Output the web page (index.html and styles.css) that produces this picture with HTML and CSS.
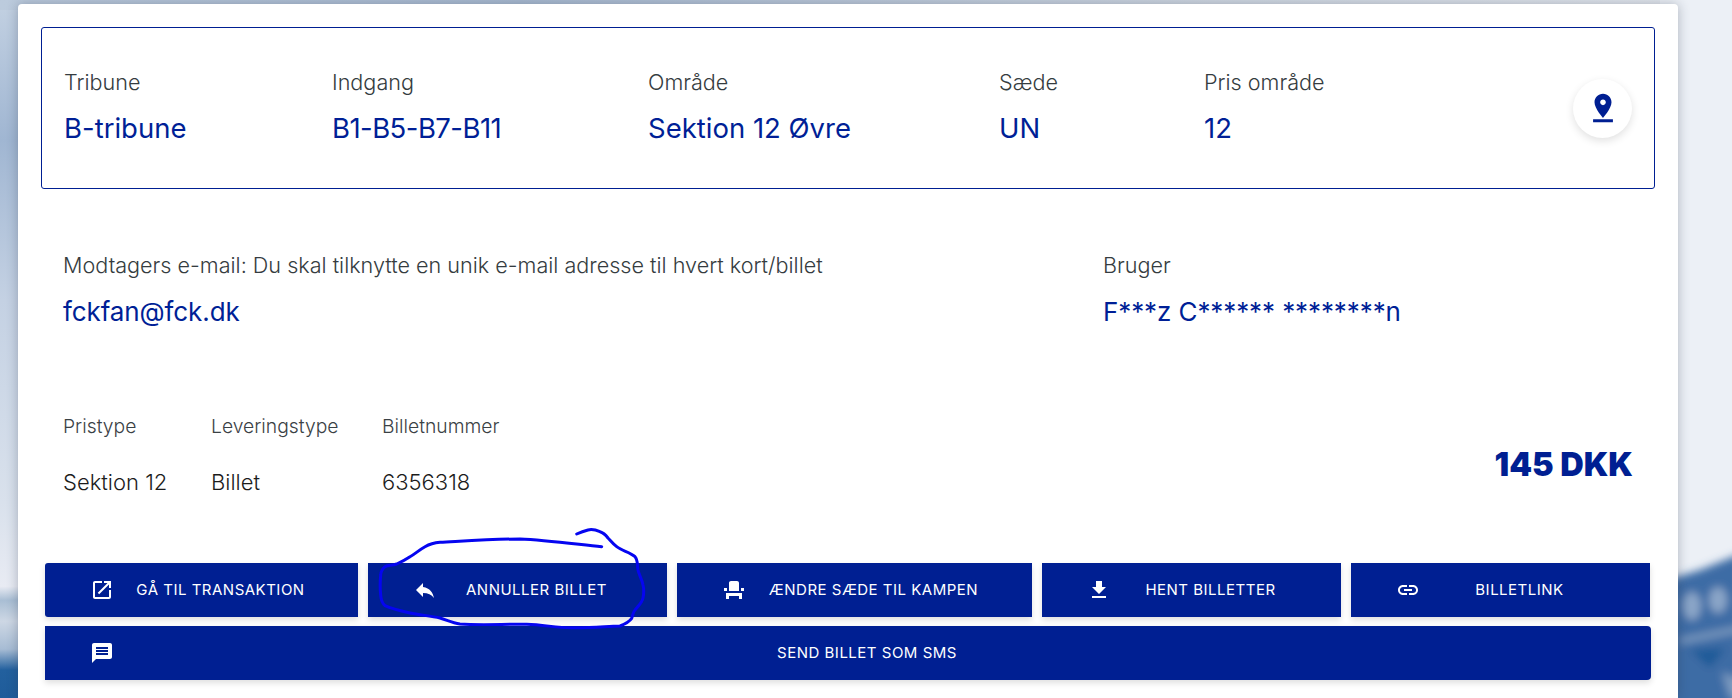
FILE: index.html
```html
<!DOCTYPE html>
<html lang="da">
<head>
<meta charset="utf-8">
<title>Billet</title>
<link rel="stylesheet" href="styles.css">
</head>
<body>
<svg class="backdrop" viewBox="0 0 1732 698" preserveAspectRatio="none" aria-hidden="true">
  <defs>
    <linearGradient id="lft" x1="0" y1="0" x2="0" y2="1">
      <stop offset="0" stop-color="#c3d1e2"/>
      <stop offset=".2" stop-color="#a0b6d2"/>
      <stop offset=".43" stop-color="#c4d1e3"/>
      <stop offset=".72" stop-color="#d9e1ec"/>
      <stop offset=".84" stop-color="#e8ebf3"/>
      <stop offset=".86" stop-color="#a9bed4"/>
      <stop offset=".89" stop-color="#cdd7e4"/>
      <stop offset=".93" stop-color="#a7bcd4"/>
      <stop offset=".96" stop-color="#22609e"/>
      <stop offset="1" stop-color="#1f5c9a"/>
    </linearGradient>
    <linearGradient id="top" x1="0" y1="0" x2="1" y2="0">
      <stop offset="0" stop-color="#bccbdd"/>
      <stop offset=".3" stop-color="#a9bbd2"/>
      <stop offset=".7" stop-color="#d0d8e2"/>
      <stop offset="1" stop-color="#e6eaf0"/>
    </linearGradient>
    <filter id="soft" x="-20%" y="-20%" width="140%" height="140%"><feGaussianBlur stdDeviation="4"/></filter>
  </defs>
  <rect x="0" y="0" width="60" height="698" fill="url(#lft)"/>
  <rect x="0" y="0" width="1732" height="10" fill="url(#top)"/>
  <rect x="1660" y="0" width="72" height="698" fill="#ecf0f6"/>
  <g filter="url(#soft)">
    <polygon points="1660,582 1700,570 1740,554 1740,710 1660,710" fill="#3c6ca5"/>
    <ellipse cx="1692" cy="606" rx="9" ry="14" fill="#8ba6c8"/>
    <ellipse cx="1718" cy="600" rx="9" ry="13" fill="#8ba6c8"/>
    <polygon points="1680,638 1740,626 1740,632 1680,644" fill="#7d9bc0"/>
    <polygon points="1690,650 1726,648 1710,668" fill="#1c5a98"/>
    <polygon points="1722,672 1740,680 1740,698 1730,698" fill="#7d9bc0"/>
  </g>
</svg>

<main class="card">
  <section class="seat-box">
    <div class="field f-tribune"><span class="label">Tribune</span><span class="value">B-tribune</span></div>
    <div class="field f-indgang"><span class="label">Indgang</span><span class="value">B1-B5-B7-B11</span></div>
    <div class="field f-omraade"><span class="label">Område</span><span class="value">Sektion 12 Øvre</span></div>
    <div class="field f-saede"><span class="label">Sæde</span><span class="value">UN</span></div>
    <div class="field f-pris"><span class="label">Pris område</span><span class="value">12</span></div>
    <button class="pin" type="button" aria-label="Vis på kort">
      <svg viewBox="0 0 24 24"><path d="M18 8c0-3.31-2.69-6-6-6S6 4.69 6 8c0 4.5 6 11 6 11s6-6.5 6-11zm-8 0c0-1.1.9-2 2-2s2 .9 2 2-.89 2-2 2c-1.1 0-2-.9-2-2zM5 20v2h14v-2H5z"/></svg>
    </button>
  </section>

  <section class="recipient">
    <div class="field"><span class="label">Modtagers e-mail: Du skal tilknytte en unik e-mail adresse til hvert kort/billet</span><span class="value">fckfan@fck.dk</span></div>
    <div class="field"><span class="label">Bruger</span><span class="value">F***z C****** ********n</span></div>
  </section>

  <section class="details">
    <div class="small f-type"><span class="small-label">Pristype</span><span class="small-value">Sektion 12</span></div>
    <div class="small f-lev"><span class="small-label">Leveringstype</span><span class="small-value">Billet</span></div>
    <div class="small"><span class="small-label">Billetnummer</span><span class="small-value">6356318</span></div>
    <div class="price">145 DKK</div>
  </section>

  <section class="actions">
    <div class="action-row">
      <a class="btn b1"><svg viewBox="0 0 24 24"><path d="M19 19H5V5h7V3H5c-1.11 0-2 .9-2 2v14c0 1.1.89 2 2 2h14c1.1 0 2-.9 2-2v-7h-2v7zM14 3v2h3.59l-9.83 9.83 1.41 1.41L19 6.41V10h2V3h-7z"/></svg><span>GÅ TIL TRANSAKTION</span></a>
      <a class="btn b2"><svg viewBox="0 0 24 24"><path d="M10 9V5l-7 7 7 7v-4.1c5 0 8.5 1.6 11 5.1-1-5-4-10-11-11z"/></svg><span>ANNULLER BILLET</span></a>
      <a class="btn b3"><svg viewBox="0 0 24 24"><path d="M4 18v3h3v-3h10v3h3v-6H4zm15-8h3v3h-3zM2 10h3v3H2zm15 3H7V5c0-1.1.9-2 2-2h6c1.1 0 2 .9 2 2v8z"/></svg><span>ÆNDRE SÆDE TIL KAMPEN</span></a>
      <a class="btn b4"><svg viewBox="0 0 24 24"><path d="M19 9h-4V3H9v6H5l7 7 7-7zM5 18v2h14v-2H5z"/></svg><span>HENT BILLETTER</span></a>
      <a class="btn b5"><svg viewBox="0 0 24 24"><path d="M3.9 12c0-1.71 1.39-3.1 3.1-3.1h4V7H7c-2.76 0-5 2.24-5 5s2.24 5 5 5h4v-1.9H7c-1.71 0-3.1-1.39-3.1-3.1zM8 13h8v-2H8v2zm9-6h-4v1.9h4c1.71 0 3.1 1.39 3.1 3.1s-1.39 3.1-3.1 3.1h-4V17h4c2.76 0 5-2.24 5-5s-2.24-5-5-5z"/></svg><span>BILLETLINK</span></a>
    </div>
    <a class="btn sms"><svg viewBox="0 0 24 24"><path d="M20 2H4c-1.1 0-1.99.9-1.99 2L2 22l4-4h14c1.1 0 2-.9 2-2V4c0-1.1-.9-2-2-2zm-2 12H6v-2h12v2zm0-3H6V9h12v2zm0-3H6V6h12v2z"/></svg><span>SEND BILLET SOM SMS</span></a>
  </section>
</main>

<svg class="scribble" viewBox="0 0 1732 698" aria-hidden="true">
  <path d="M601.7 546.7C575 544 545 540 520 539C495 539 465 541 440 542.3C432 543 428 545 425 546.7C419 550 415 554 410 556.7C405 560 401 562 396.7 564C392 566 388 564.5 385 566.7C381.5 570 380.7 572 380.7 575C380 582 380 589 380.7 595C381 600 382 603 385 605.7C392 609 401 611 410 613C420 615 431 616 440 618C447 620 452 623 460 624C480 625.5 505 624 526.7 624.3C545 625 558 628 573 627.7C590 628 605 626.5 620 626C625 624 629 622 631.7 618.3C633 615 633 612 635 610C639 605 642 603 643 598C644 593 644 589 643 585C642 579 639 575 638 570C637 564 638 560 635 556.7C630 552 622 551 616.7 546.7C612 543 611 541 608 538C605 534 603 532.5 600 531.7C596 530 592 529 588 530C584 531 580 532.5 576.7 534"/>
</svg>
</body>
</html>
```
FILE: styles.css
```css
* { box-sizing: border-box; }
html, body { margin: 0; height: 698px; overflow: hidden; }
body {
  position: relative;
  background: #ecf0f6;
  font-family: Inter, "Liberation Sans", sans-serif;
  padding: 4px 54px 0 18px;
}
.backdrop, .scribble {
  position: absolute;
  left: 0;
  top: 0;
  width: 1732px;
  height: 698px;
}
.scribble { pointer-events: none; }
.scribble path {
  fill: none;
  stroke: #0505f0;
  stroke-width: 3;
  stroke-linecap: round;
  stroke-linejoin: round;
}
.card {
  position: relative;
  height: 694px;
  background: #fff;
  border-radius: 4px 4px 0 0;
  box-shadow: 0 0 12px rgba(40, 50, 70, .32);
  padding: 23px 23px 0 23px;
}
.seat-box {
  display: flex;
  align-items: center;
  height: 162px;
  border: 1px solid #001f92;
  border-radius: 3px;
  padding: 0 22px;
}
.field { display: flex; flex-direction: column; margin-top: -2px; }
.recipient .field { margin-top: 0; }
.label { font-size: 21.6px; line-height: 24px; color: #353c40; font-weight: 300; }
.value { font-size: 27.5px; line-height: 34px; color: #001f96; margin-top: 17px; font-weight: 400; }
.f-tribune { width: 268px; }
.f-indgang { width: 316px; }
.f-indgang .value { letter-spacing: -.55px; }
.f-omraade { width: 351px; }
.f-saede { width: 205px; }
.f-pris { flex: 1; }
.pin {
  width: 59px;
  height: 59px;
  border: 0;
  border-radius: 50%;
  background: #fff;
  box-shadow: 0 3px 8px rgba(0, 0, 0, .12);
  padding: 0;
  display: grid;
  place-items: center;
}
.pin svg { width: 34px; height: 34px; fill: #001f92; }
.recipient {
  display: flex;
  padding: 64px 0 0 22px;
}
.recipient .field:first-child { width: 1040px; }
.recipient .value { margin-top: 18px; font-size: 26px; letter-spacing: -.1px; }
.details {
  display: flex;
  align-items: flex-start;
  padding: 86px 22px 0 22px;
}
.small { display: flex; flex-direction: column; width: 172px; }
.f-type { width: 148px; }
.f-lev { width: 171px; }
.small-label { font-size: 19.3px; line-height: 22px; color: #3a4145; font-weight: 300; }
.small-value { font-size: 22px; line-height: 28px; color: #1c1c1c; margin-top: 31px; font-weight: 300; }
.price {
  margin-left: auto;
  margin-top: 30px;
  font-size: 32.5px;
  line-height: 40px;
  font-weight: 900;
  color: #001f92;
}
.actions { padding: 67px 4px 0 4px; display: flex; flex-direction: column; gap: 9px; }
.action-row { display: flex; gap: 10px; }
.btn {
  display: grid;
  grid-template-columns: 24px 1fr;
  align-items: center;
  height: 54px;
  padding: 0 31px 0 45px;
  background: #001f92;
  color: #fff;
  box-shadow: 0 3px 6px rgba(0, 0, 0, .13);
  font-size: 15px;
  letter-spacing: .5px;
  font-weight: 400;
}
.btn span { text-align: center; padding-bottom: 2px; }
.btn svg { width: 24px; height: 24px; fill: #fff; }
.b1 { width: 313px; border-radius: 3px 0 0 3px; }
.b2 { width: 299px; }
.b3 { width: 355px; }
.b4 { width: 299px; }
.b5 { width: 299px; }
.sms { width: 1606px; border-radius: 0 4px 4px 0; }
```
